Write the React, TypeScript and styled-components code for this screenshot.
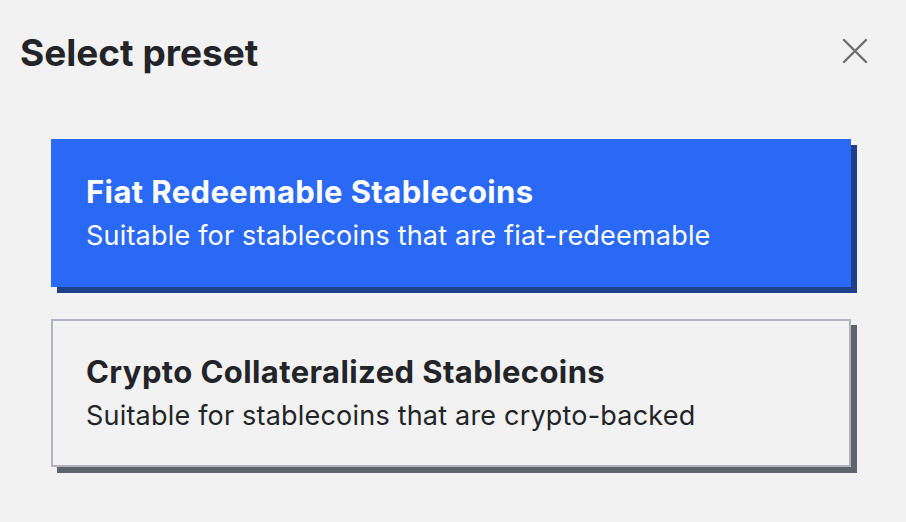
import styled, { createGlobalStyle } from 'styled-components';

const GlobalStyle = createGlobalStyle`
    html, body {
        margin: 0;
        padding: 0;
        background: #f2f2f2;
    }
    body {
        font-family: Inter, "Noto Sans", "Liberation Sans", sans-serif;
        color: #222428;
    }
`;

type Preset = {
    key: string;
    title: string;
    description: string;
};

const presets: Preset[] = [
    { key: 'fiat', title: 'Fiat Redeemable Stablecoins', description: 'Suitable for stablecoins that are fiat-redeemable' },
    { key: 'crypto', title: 'Crypto Collateralized Stablecoins', description: 'Suitable for stablecoins that are crypto-backed' },
];

const App = () => {
    const selected = 'fiat';

    return (
        <>
            <GlobalStyle />
            <Dialog>
                <Header>
                    <Title>Select preset</Title>
                    <CloseButton aria-label='Close'>
                        <svg width='26' height='26' viewBox='0 0 26 26'>
                            <path d='M2 2 L24 24 M24 2 L2 24' stroke='#6e6e6e' strokeWidth='2.4' strokeLinecap='round' />
                        </svg>
                    </CloseButton>
                </Header>
                <List>
                    {presets.map(p => (
                        <Card key={p.key} $active={p.key === selected}>
                            <CardTitle>{p.title}</CardTitle>
                            <CardText>{p.description}</CardText>
                        </Card>
                    ))}
                </List>
            </Dialog>
        </>
    );
};

export default App;

// styled-components

const Dialog = styled.div`
    width: 906px;
    height: 522px;
    box-sizing: border-box;
`;

const Header = styled.div`
    display: flex;
    align-items: center;
    justify-content: space-between;
    padding: 30px 38px 0 20px;
    height: 46px;
`;

const Title = styled.h1`
    margin: 0;
    font-size: 37px;
    line-height: 46px;
    font-weight: 700;
    color: #222428;
`;

const CloseButton = styled.button`
    display: flex;
    align-items: center;
    justify-content: center;
    margin-bottom: 4px;
    padding: 0;
    border: none;
    background: none;
    cursor: pointer;
`;

const List = styled.div`
    display: flex;
    flex-direction: column;
    gap: 32px;
    padding: 63px 55px 0 51px;
`;

const Card = styled.div<{ $active: boolean }>`
    box-sizing: border-box;
    height: 148px;
    display: flex;
    flex-direction: column;
    gap: 7px;
    padding: 32px 33px 0;
    background: ${p => (p.$active ? '#2a69f6' : '#f2f2f2')};
    color: ${p => (p.$active ? '#ffffff' : '#222428')};
    border: 2px solid ${p => (p.$active ? '#2a69f6' : '#b1b4be')};
    box-shadow: 6px 6px 0 ${p => (p.$active ? '#1e3f8a' : '#5f636b')};
    cursor: pointer;
`;

const CardTitle = styled.div`
    font-size: 31px;
    font-weight: 700;
    line-height: 38px;
    letter-spacing: 0.4px;
`;

const CardText = styled.div`
    font-size: 27px;
    font-weight: 400;
    line-height: 36px;
    letter-spacing: 0.2px;
`;
